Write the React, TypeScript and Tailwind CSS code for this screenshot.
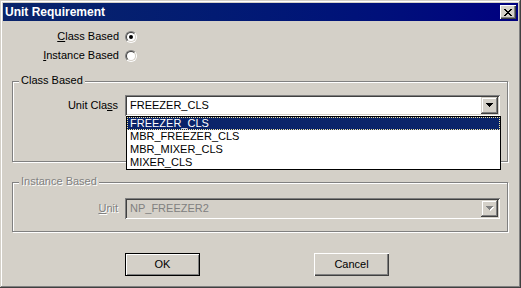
import React from 'react';

const sunken =
  'shadow-[inset_1px_1px_0_#808080,inset_-1px_-1px_0_#fff,inset_2px_2px_0_#404040,inset_-2px_-2px_0_#d4d0c8]';
const raisedFrame =
  'shadow-[inset_-1px_-1px_0_#404040,inset_1px_1px_0_#d4d0c8,inset_-2px_-2px_0_#808080,inset_2px_2px_0_#fff]';
const raisedButton =
  'shadow-[inset_1px_1px_0_#fff,inset_-1px_-1px_0_#404040,inset_-2px_-2px_0_#808080]';

const items = ['FREEZER_CLS', 'MBR_FREEZER_CLS', 'MBR_MIXER_CLS', 'MIXER_CLS'];

function Radio({ checked }: { checked?: boolean }) {
  return (
    <div className="h-[12px] w-[12px] rounded-full border border-t-[#808080] border-l-[#808080] border-b-white border-r-white">
      <div className="flex h-full w-full items-center justify-center rounded-full border border-t-[#404040] border-l-[#404040] border-b-[#d4d0c8] border-r-[#d4d0c8] bg-white">
        {checked && <div className="h-[4px] w-[4px] rounded-full bg-black" />}
      </div>
    </div>
  );
}

function Arrow({ disabled }: { disabled?: boolean }) {
  const rows = (fill: string, dx: number, dy: number) =>
    [7, 5, 3, 1].map((w, i) => (
      <rect key={fill + i} x={(7 - w) / 2 + dx} y={i + dy} width={w} height={1} fill={fill} />
    ));
  return (
    <svg width="8" height="5" viewBox="0 0 8 5" shapeRendering="crispEdges">
      {disabled ? (
        <>
          {rows('#ffffff', 1, 1)}
          {rows('#808080', 0, 0)}
        </>
      ) : (
        rows('#000000', 0, 0)
      )}
    </svg>
  );
}

function Combo({ value, disabled }: { value: string; disabled?: boolean }) {
  return (
    <div
      className={`flex h-[21px] w-[375px] p-[2px] ${sunken} ${disabled ? 'bg-[#d4d0c8]' : 'bg-white'}`}
    >
      <div className={`flex-1 pl-[3px] leading-[17px] ${disabled ? 'text-[#808080]' : 'text-black'}`}>
        {value}
      </div>
      <div className={`flex h-[17px] w-[17px] items-center justify-center bg-[#d4d0c8] ${raisedFrame}`}>
        <Arrow disabled={disabled} />
      </div>
    </div>
  );
}

function GroupBox({
  label,
  disabled,
  className,
  children,
}: {
  label: string;
  disabled?: boolean;
  className: string;
  children: React.ReactNode;
}) {
  return (
    <div
      className={`relative ml-[9px] w-[496px] border border-[#808080] shadow-[inset_1px_1px_0_#fff,1px_1px_0_#fff] ${className}`}
    >
      <span
        className={`absolute -top-[8px] left-[6px] bg-[#d4d0c8] px-[2px] leading-[13px] ${
          disabled ? 'text-[#808080] [text-shadow:1px_1px_0_#fff]' : 'text-black'
        }`}
      >
        {label}
      </span>
      {children}
    </div>
  );
}

function CloseIcon() {
  const px: [number, number, number][] = [
    [0, 0, 2], [6, 0, 2],
    [1, 1, 2], [5, 1, 2],
    [2, 2, 4],
    [3, 3, 2],
    [2, 4, 4],
    [1, 5, 2], [5, 5, 2],
    [0, 6, 2], [6, 6, 2],
  ];
  return (
    <svg width="8" height="7" viewBox="0 0 8 7" shapeRendering="crispEdges">
      {px.map(([x, y, w], i) => (
        <rect key={i} x={x} y={y} width={w} height={1} fill="#000" />
      ))}
    </svg>
  );
}

export default function App() {
  return (
    <div
      className={`h-[288px] w-[521px] bg-[#d4d0c8] p-[3px] font-['Liberation_Sans',Arial,sans-serif] text-[11px] text-black ${raisedFrame}`}
    >
      {/* Title bar */}
      <div className="flex h-[18px] items-center justify-between bg-gradient-to-r from-[#0a246a] to-[#000080] pl-[2px] pr-[2px]">
        <span className="text-[12px] font-bold leading-[18px] text-white">Unit Requirement</span>
        <div className={`flex h-[14px] w-[16px] items-center justify-center bg-[#d4d0c8] ${raisedButton}`}>
          <CloseIcon />
        </div>
      </div>

      {/* Radios */}
      <div className="mt-[6px] flex flex-col">
        <div className="flex h-[19px] items-center">
          <span className="w-[116px] text-right">
            <span className="underline">C</span>lass Based
          </span>
          <div className="ml-[6px]">
            <Radio checked />
          </div>
        </div>
        <div className="flex h-[19px] items-center">
          <span className="w-[116px] text-right">
            <span className="underline">I</span>nstance Based
          </span>
          <div className="ml-[6px]">
            <Radio />
          </div>
        </div>
      </div>

      {/* Class based group */}
      <GroupBox label="Class Based" className="mt-[16px] h-[81px] pt-[13px]">
        <div className="flex h-[21px] items-center">
          <span className="w-[105px] text-right">
            Unit Cla<span className="underline">s</span>s
          </span>
          <div className="relative ml-[7px]">
            <Combo value="FREEZER_CLS" />
            <div className="absolute left-[1px] top-[21px] z-10 w-[375px] border border-black bg-white">
              {items.map((it, i) =>
                i === 0 ? (
                  <div
                    key={it}
                    className="h-[13px] border border-dotted border-[#f3e7a0] bg-[#0a246a] pl-[2px] leading-[11px] text-white"
                  >
                    {it}
                  </div>
                ) : (
                  <div key={it} className="h-[13px] pl-[3px] leading-[13px]">
                    {it}
                  </div>
                ),
              )}
            </div>
          </div>
        </div>
      </GroupBox>

      {/* Instance based group */}
      <GroupBox label="Instance Based" disabled className="mt-[20px] h-[50px] pt-[15px]">
        <div className="flex h-[21px] items-center">
          <span className="w-[105px] text-right text-[#808080] [text-shadow:1px_1px_0_#fff]">
            <span className="underline">U</span>nit
          </span>
          <div className="ml-[7px]">
            <Combo value="NP_FREEZER2" disabled />
          </div>
        </div>
      </GroupBox>

      {/* Buttons */}
      <div className="mt-[21px] flex gap-[114px] pl-[122px]">
        <button className="h-[23px] w-[75px] border border-black bg-[#d4d0c8] shadow-[inset_1px_1px_0_#fff,inset_-1px_-1px_0_#808080]">
          OK
        </button>
        <button className={`h-[23px] w-[75px] bg-[#d4d0c8] ${raisedButton}`}>Cancel</button>
      </div>
    </div>
  );
}
